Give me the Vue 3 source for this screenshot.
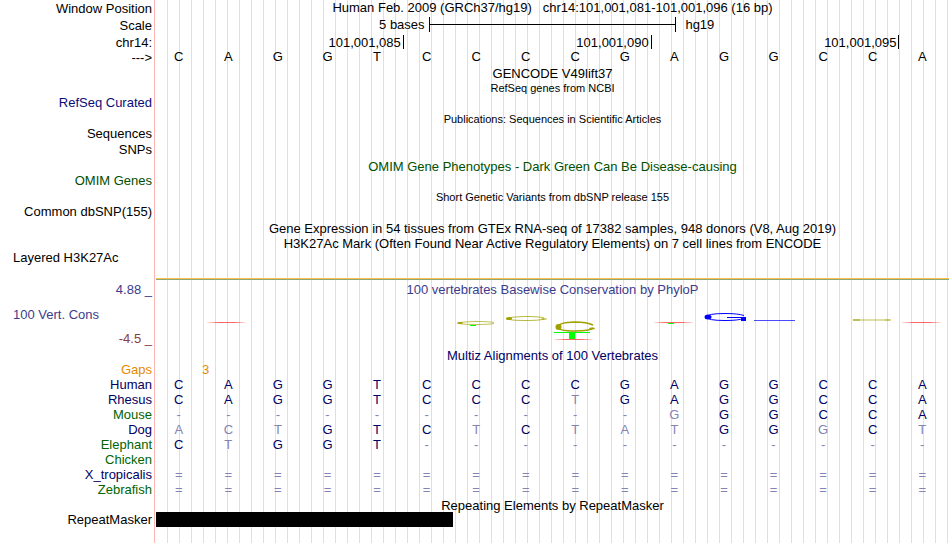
<script setup>
const mono = (s) => s.split('')

const rows = [
  { size: 'h17', label: 'Window Position', low: true, title: 'Human Feb. 2009 (GRCh37/hg19)\u00a0\u00a0 chr14:101,001,081-101,001,096 (16 bp)' },
  { size: 'h18', label: 'Scale', low: true, kind: 'scale' },
  { size: 'h14', label: 'chr14:', kind: 'ticks' },
  { size: 'h17', label: '--->', low: true, kind: 'bases', bases: 'CAGGTCCCCGAGGCCA', tone: 'black' },
  { size: 'h15', title: 'GENCODE V49lift37' },
  { size: 'h14', title: 'RefSeq genes from NCBI', small: true },
  { size: 'h17', label: 'RefSeq Curated', tone: 'navy' },
  { size: 'h14', title: 'Publications: Sequences in Scientific Articles', small: true },
  { size: 'h16', label: 'Sequences' },
  { size: 'h17', label: 'SNPs' },
  { size: 'h14', title: 'OMIM Gene Phenotypes - Dark Green Can Be Disease-causing', tone: 'omim' },
  { size: 'h17', label: 'OMIM Genes', tone: 'omim' },
  { size: 'h14', title: 'Short Genetic Variants from dbSNP release 155', small: true },
  { size: 'h17', label: 'Common dbSNP(155)' },
  { size: 'h15', title: 'Gene Expression in 54 tissues from GTEx RNA-seq of 17382 samples, 948 donors (V8, Aug 2019)' },
  { size: 'h14', title: 'H3K27Ac Mark (Often Found Near Active Regulatory Elements) on 7 cell lines from ENCODE' },
  { size: 'h32', label: 'Layered H3K27Ac', left: true, kind: 'signal' },
  { size: 'h66', kind: 'cons' },
  { size: 'h14', title: 'Multiz Alignments of 100 Vertebrates', tone: 'deep' },
  { size: 'h15', label: 'Gaps', tone: 'orange', kind: 'gaps' },
  { size: 'h15', label: 'Human', tone: 'deep', kind: 'bases', bases: 'CAGGTCCCCGAGGCCA' },
  { size: 'h15', label: 'Rhesus', tone: 'deep', kind: 'bases', bases: 'CAGGTCCCtGAGGCCA' },
  { size: 'h15', label: 'Mouse', tone: 'green', kind: 'bases', bases: '----------gGGCCA' },
  { size: 'h15', label: 'Dog', tone: 'deep', kind: 'bases', bases: 'actGTCtCtatGGgCt' },
  { size: 'h15', label: 'Elephant', tone: 'green', kind: 'bases', bases: 'CtGGT-----------' },
  { size: 'h15', label: 'Chicken', tone: 'green' },
  { size: 'h15', label: 'X_tropicalis', tone: 'deep', kind: 'bases', bases: '================' },
  { size: 'h16', label: 'Zebrafish', tone: 'green', kind: 'bases', bases: '================' },
  { size: 'h14', title: 'Repeating Elements by RepeatMasker' },
  { size: 'h15', label: 'RepeatMasker', kind: 'repeat' },
]

const ticks = ['101,001,085', '101,001,090', '101,001,095']

// lower case means the base differs from human
function isFaint(b) {
  return !/[A-Z]/.test(b)
}
</script>

<template>
  <main class="browser">
    <div v-for="(row, i) in rows" :key="i" class="row" :class="row.size">
      <div v-if="row.kind === 'cons'" class="label cons-label">
        <span class="max">4.88 _</span>
        <span class="name">100 Vert. Cons</span>
        <span class="min">-4.5 _</span>
      </div>
      <div v-else class="label" :class="[row.title ? '' : row.tone, { low: row.low, left: row.left }]">{{ row.label }}</div>

      <div class="track">
        <div v-if="row.title" class="title" :class="[row.tone, { small: row.small }]">{{ row.title }}</div>

        <div v-else-if="row.kind === 'scale'" class="scale">
          <span class="scale-left">5 bases</span>
          <span class="ruler"><i></i></span>
          <span class="scale-right">hg19</span>
        </div>

        <div v-else-if="row.kind === 'ticks'" class="columns">
          <span v-for="t in ticks" :key="t" class="tick">{{ t }}</span>
        </div>

        <div v-else-if="row.kind === 'bases'" class="columns bases" :class="row.tone === 'black' ? 'black' : 'deep'">
          <span v-for="(b, j) in mono(row.bases)" :key="j" :class="{ faint: isFaint(b) }">{{ b.toUpperCase() }}</span>
        </div>

        <div v-else-if="row.kind === 'gaps'" class="columns orange"><span class="gap">3</span></div>

        <div v-else-if="row.kind === 'signal'" class="signal"></div>

        <div v-else-if="row.kind === 'cons'" class="cons">
          <div class="title violet">100 vertebrates Basewise Conservation by PhyloP</div>
          <svg viewBox="0 0 793 51" preserveAspectRatio="none" aria-hidden="true">
            <defs>
              <linearGradient id="red">
                <stop offset="0" stop-color="#f00" stop-opacity="0.1" />
                <stop offset="0.3" stop-color="#f00" stop-opacity="0.6" />
                <stop offset="0.7" stop-color="#f00" stop-opacity="0.6" />
                <stop offset="1" stop-color="#f00" stop-opacity="0.1" />
              </linearGradient>
            </defs>
            <g fill="url(#red)">
              <rect x="51" y="25" width="39" height="1" />
              <rect x="398" y="42" width="39" height="1" />
              <rect x="498" y="25" width="39" height="1" />
              <rect x="746" y="25" width="39" height="1" />
            </g>
            <!-- yellow marks -->
            <g fill="none" stroke="#a0a000">
              <path d="M338 25.5 Q334 24.5 320 24.5 Q303 25 303 26 Q303 27.5 320 27.5 Q334 27.5 338 26.5" stroke-opacity="0.65" />
              <path d="M388 21 Q384 19.5 370 19.5 Q352 20 352 21.5 Q352 23.5 370 23.5 Q384 23.5 388 22" stroke-opacity="0.75" />
              <path d="M437 28 Q431 25 419 25 Q402 25.5 402 30 Q402 34 419 34 Q434 34 437 31" stroke-width="1.5" />
            </g>
            <g fill="#a0a000">
              <ellipse cx="304" cy="26" rx="3" ry="1" />
              <ellipse cx="353" cy="21.5" rx="3" ry="1.5" />
              <ellipse cx="402.500" cy="30" rx="3" ry="3" />
              <ellipse cx="388" cy="22" rx="3" ry="1" fill-opacity="0.6" />
              <ellipse cx="436" cy="31.500" rx="3" ry="1" />
            </g>
            <g fill="#0f0">
              <rect x="314" y="28" width="6" height="1" />
              <rect x="398" y="35" width="36" height="1" />
              <rect x="413" y="35" width="6" height="7" />
              <rect x="512" y="26" width="6" height="1" />
            </g>
            <path d="M588 18.500 Q582 16.500 569 16.500 Q551 16.500 551 20 Q551 23.500 569 23.500 Q582 23.500 588 21.500 M571 20.500 H588" fill="none" stroke="#00f" />
            <ellipse cx="552" cy="20" rx="3.500" ry="2.500" fill="#00f" />
            <rect x="585" y="20" width="5" height="4" fill="#00f" />
            <rect x="598" y="23" width="41" height="1" fill="#00f" fill-opacity="0.7" />
            <rect x="697" y="22" width="38" height="2" fill="#a0a000" fill-opacity="0.35" />
            <rect x="697" y="22" width="7" height="2" fill="#a0a000" fill-opacity="0.5" />
            <rect x="729" y="22" width="5" height="2" fill="#a0a000" fill-opacity="0.3" />
          </svg>
        </div>

        <div v-else-if="row.kind === 'repeat'" class="repeat"></div>
      </div>
    </div>
  </main>
</template>

<style>
body {
  background: #fff;
}
</style>

<style scoped>
.browser {
  min-height: 100vh;
  box-sizing: border-box;
  padding-right: 1px;
  font-family: "Liberation Sans", Arial, sans-serif;
  font-size: 13px;
  line-height: 15px;
  color: #000;
  background-image:
    linear-gradient(#ffb4b4, #ffb4b4),
    linear-gradient(#fff, #fff),
    repeating-linear-gradient(to right, #dcdcf5 0 1px, transparent 1px 12px);
  background-size: 1px 100%, 156px 100%, 1200px 100%;
  background-position: 154px 0, 0 0, 11px 0;
  background-repeat: no-repeat, no-repeat, repeat;
}
.row {
  display: grid;
  grid-template-columns: 156px minmax(0, 1fr);
}
.h14 { height: 14px; }
.h15 { height: 15px; }
.h16 { height: 16px; }
.h17 { height: 17px; }
.h18 { height: 18px; }
.h32 { height: 32px; }
.h66 { height: 66px; }
.label {
  padding-right: 4px;
  text-align: right;
  white-space: nowrap;
}
.label.low {
  padding-top: 1px;
}
.label.left {
  padding-left: 13px;
  text-align: left;
}
.title {
  text-align: center;
  white-space: nowrap;
}
.small {
  font-size: 11px;
}
.navy { color: #0c0c78; }
.deep { color: #000064; }
.omim { color: #005000; }
.green { color: #006400; }
.orange { color: #e68a00; }
.violet { color: #3c3c8c; }
.scale {
  display: grid;
  grid-template-columns: 1fr 31.25% 1fr;
}
.scale-left {
  padding-right: 4px;
  text-align: right;
}
.scale-right {
  padding-left: 9px;
}
.ruler {
  display: flex;
  align-items: center;
  border: solid #000;
  border-width: 0 1px;
}
.ruler i {
  flex: 1;
  height: 1px;
  background: #000;
}
.columns {
  display: grid;
  grid-template-columns: repeat(16, minmax(0, 1fr));
}
.tick {
  grid-column: span 5;
  height: 14px;
  padding-right: 2px;
  border-right: 1px solid #000;
  text-align: right;
}
.bases span {
  padding-right: 4px;
  text-align: center;
}
.bases .faint {
  color: #8484b4;
}
.gap {
  grid-column: span 2;
  text-align: center;
}
.signal {
  box-sizing: border-box;
  height: 30px;
  border-bottom: 1px solid #8caa78;
}
.signal::before {
  content: "";
  display: block;
  box-sizing: border-box;
  height: 29px;
  border-bottom: 1px solid #ffc04d;
}
.cons-label {
  display: flex;
  flex-direction: column;
  justify-content: space-between;
  height: 64px;
}
.cons-label .max {
  color: #3c3c8c;
}
.cons-label .name {
  padding-left: 13px;
  text-align: left;
  color: #3c3c8c;
}
.cons-label .min {
  color: #8c3c3c;
}
.cons svg {
  display: block;
  width: 100%;
  height: 51px;
}
.repeat {
  width: 37.5%;
  height: 15px;
  background: #000;
}
</style>
